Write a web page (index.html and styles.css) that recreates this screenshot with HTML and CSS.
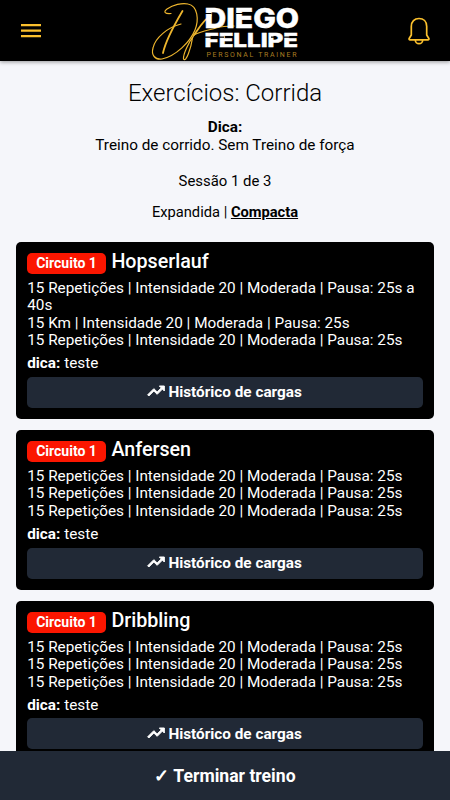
FILE: index.html
```html
<!DOCTYPE html>
<html lang="pt-BR">
<head>
<meta charset="utf-8">
<meta name="viewport" content="width=device-width, initial-scale=1">
<title>Exercícios: Corrida</title>
<link rel="stylesheet" href="styles.css">
</head>
<body>
<svg class="defs" aria-hidden="true">
  <symbol id="trend" viewBox="0 0 24 24"><path d="M16 6l2.290 2.290-4.880 4.880-4-4L2 16.590 3.410 18l6-6 4 4 6.300-6.290L22 12V6z" fill="#fff" stroke="#fff" stroke-width="1.200"/></symbol>
</svg>
<header class="topbar">
  <button class="icon-btn" aria-label="Menu"><svg width="20" height="14" viewBox="0 0 20 14"><path d="M0 1.200h20M0 6.600h20M0 12.200h20" stroke="#fbc02d" stroke-width="2.200"/></svg></button>
  <svg class="logo" width="150" height="61" viewBox="150 0 150 61">
    <g fill="none" stroke="#edb52d" stroke-linecap="round" stroke-linejoin="round">
      <path class="thick" d="M182.500 11C176 22 166 39 163 53"/>
      <path class="thin" d="M171 13.500C165 14 163 12 167 9C173 5 182 2.500 188 4C198 6 199 20 195 30C190 42 176 56 162 59C155 60 151 55 153 48C155 38 168 27 181 24"/>
      <path class="thick" d="M211 15.500C205 18 199 28 194 35"/>
      <path class="thin" d="M194 35C189 42 183 54 183.500 59C186 63 191 48 192.500 38L194 35C199 32 209 30 216 28C223 26 229 26 234 26"/>
    </g>
    <g class="wordmark">
      <text x="204.500" y="27.500" font-size="27" textLength="94.500" lengthAdjust="spacingAndGlyphs">DIEGO</text>
      <text x="204.500" y="46.700" font-size="18.800" textLength="93.500" lengthAdjust="spacingAndGlyphs">FELLIPE</text>
    </g>
    <path class="slit" d="M205 13.500h6.500M236 13.500h8M205 37.200h6M218 37.200h6M271 37.200h5M284 37.200h6"/>
    <text class="tagline" x="206.500" y="57" textLength="90">PERSONAL TRAINER</text>
  </svg>
  <button class="icon-btn" aria-label="Notificações"><svg width="22" height="28" viewBox="0 0 22 28"><path d="M3.300 18V9.500C3.300 4.500 6.500 1.500 11 1.500s7.700 3 7.700 8V18l2 3.200c.5.900.2 1.600-.8 1.600H2.100c-1 0-1.300-.7-.8-1.600zM7.300 23a3.700 3.700 0 0 0 7.400 0" fill="none" stroke="#fbc02d" stroke-width="1.700" stroke-linejoin="round"/></svg></button>
</header>
<main>
  <h1>Exercícios: Corrida</h1>
  <p class="tip"><b>Dica:</b><br>Treino de corrido. Sem Treino de força</p>
  <p class="session">Sessão 1 de 3</p>
  <p class="modes">Expandida | <a class="active">Compacta</a></p>
  <section class="card">
    <h2><span class="badge">Circuito 1</span> Hopserlauf</h2>
    <p class="sets">15 Repetições | Intensidade 20 | Moderada | Pausa: 25s a 40s<br>15 Km | Intensidade 20 | Moderada | Pausa: 25s<br>15 Repetições | Intensidade 20 | Moderada | Pausa: 25s</p>
    <p class="note"><b>dica:</b> teste</p>
    <button class="history"><svg class="trend"><use href="#trend"/></svg>Histórico de cargas</button>
  </section>
  <section class="card">
    <h2><span class="badge">Circuito 1</span> Anfersen</h2>
    <p class="sets">15 Repetições | Intensidade 20 | Moderada | Pausa: 25s<br>15 Repetições | Intensidade 20 | Moderada | Pausa: 25s<br>15 Repetições | Intensidade 20 | Moderada | Pausa: 25s</p>
    <p class="note"><b>dica:</b> teste</p>
    <button class="history"><svg class="trend"><use href="#trend"/></svg>Histórico de cargas</button>
  </section>
  <section class="card">
    <h2><span class="badge">Circuito 1</span> Dribbling</h2>
    <p class="sets">15 Repetições | Intensidade 20 | Moderada | Pausa: 25s<br>15 Repetições | Intensidade 20 | Moderada | Pausa: 25s<br>15 Repetições | Intensidade 20 | Moderada | Pausa: 25s</p>
    <p class="note"><b>dica:</b> teste</p>
    <button class="history"><svg class="trend"><use href="#trend"/></svg>Histórico de cargas</button>
  </section>
</main>
<button class="finish">✓ Terminar treino</button>
</body>
</html>
```
FILE: styles.css
```css
* { box-sizing: border-box; }
body {
  margin: 0;
  height: 800px;
  display: flex;
  flex-direction: column;
  overflow: hidden;
  background: #f5f6fa;
  color: #000;
  font-family: Roboto, sans-serif;
  font-size: 15.3px;
  line-height: 17.6px;
}
button { font-family: inherit; border: 0; padding: 0; color: #fff; }
.defs { display: none; }
.topbar {
  flex: none;
  height: 61px;
  padding: 0 20px 0 21px;
  display: flex;
  align-items: center;
  justify-content: space-between;
  background: #000;
  box-shadow: 0 1px 4px rgba(0, 0, 0, .4);
}
.icon-btn { background: none; display: flex; }
.logo { display: block; }
.thin { stroke-width: 1.2; }
.thick { stroke-width: 1.8; }
.wordmark { font-family: Inter, sans-serif; font-weight: 800; fill: #fff; stroke: #fff; stroke-width: .5; }
.slit { stroke: #000; stroke-width: 1.2; }
.tagline { font-family: Roboto, sans-serif; font-size: 7px; fill: #a87d20; }
main { flex: 1; min-height: 0; overflow: hidden; padding: 17px 16.5px 0; }
h1 { margin: 0; font-size: 24px; font-weight: 300; line-height: 30px; text-align: center; }
p { margin: 0; }
.tip, .session, .modes { text-align: center; }
.tip { margin-top: 11px; }
.session { margin-top: 18.6px; font-size: 14.9px; }
.modes { margin-top: 13.6px; font-size: 14.7px; }
.active { font-weight: 700; text-decoration: underline; }
.card {
  margin: 20px 0 0 -.3px;
  padding: 9px 11px 11px;
  border-radius: 5px;
  background: #000;
  color: #fff;
}
.card + .card { margin-top: 11px; }
h2 { margin: 0; font-size: 19.7px; line-height: 22px; font-weight: 500; display: flex; gap: 5.5px; }
.badge {
  height: 21px;
  margin-top: 2px;
  padding: 0 9px;
  border-radius: 5px;
  background: #fb1600;
  font-size: 14px;
  line-height: 21px;
  font-weight: 700;
}
.sets { margin-top: 6px; }
.note { margin-top: 5.3px; }
.history {
  width: 100%;
  height: 31px;
  margin-top: 4px;
  border-radius: 5px;
  background: #212936;
  display: flex;
  align-items: center;
  justify-content: center;
  gap: 2.5px;
  font-size: 15.3px;
  font-weight: 700;
}
.trend { width: 20px; height: 20px; margin: -2px 0 0 -2px; }
.finish { flex: none; height: 49px; background: #212936; font-size: 17.6px; font-weight: 700; }
```
